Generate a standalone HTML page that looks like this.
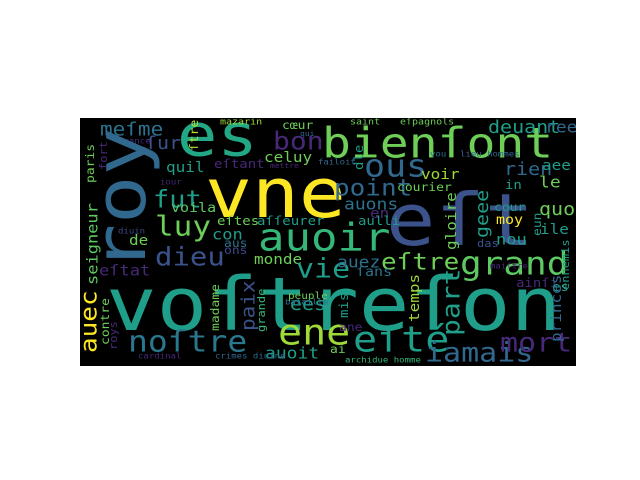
<!DOCTYPE html>
<html><head><meta charset="utf-8"><style>
html,body{margin:0;padding:0;background:#fff;width:640px;height:480px;overflow:hidden}
#c{position:absolute;left:80px;top:118px;width:496px;height:248px;background:#000;overflow:hidden}
.w{position:absolute;font-family:"DejaVu Sans Mono","Liberation Mono",monospace;line-height:1;white-space:nowrap;transform:scaleY(.88);transform-origin:0 0.92em}
.w.v{transform:rotate(-90deg) translateY(0.92em) scaleY(.88) translateY(-0.92em);transform-origin:0 0}
</style></head><body>
<div id="c"></div>
<div id="w" style="position:absolute;left:0;top:0;width:640px;height:480px;clip-path:inset(118px 64px 114px 80px)">
<div class="w" style="left:106px;top:258px;font-size:84px;color:#1f9e89">voſtreſon</div>
<div class="w" style="left:205px;top:151px;font-size:78px;color:#fde725">vne</div>
<div class="w" style="left:386px;top:176px;font-size:82px;color:#3b528b">eſt</div>
<div class="w" style="left:258px;top:214px;font-size:44px;color:#35b779">auoir</div>
<div class="w" style="left:322px;top:117px;font-size:48px;color:#6ece58">bienſont</div>
<div class="w" style="left:177px;top:99px;font-size:67px;color:#22a884">es</div>
<div class="w" style="left:460px;top:245px;font-size:36px;color:#5ec962">grand</div>
<div class="w" style="left:128px;top:323px;font-size:33px;color:#2a788e">noſtre</div>
<div class="w" style="left:155px;top:241px;font-size:29px;color:#3b528b">dieu</div>
<div class="w" style="left:155px;top:210px;font-size:31px;color:#6ece58">luy</div>
<div class="w" style="left:153px;top:185px;font-size:27px;color:#1f9e89">fut</div>
<div class="w" style="left:100px;top:118px;font-size:21px;color:#2c728e">meſme</div>
<div class="w" style="left:145px;top:132px;font-size:20px;color:#3b528b">ſur</div>
<div class="w" style="left:273px;top:126px;font-size:28px;color:#482878">bon</div>
<div class="w" style="left:264px;top:149px;font-size:16px;color:#6ece58">celuy</div>
<div class="w" style="left:166px;top:159px;font-size:16px;color:#1f9e89">quil</div>
<div class="w" style="left:214px;top:157px;font-size:14px;color:#482878">eſtant</div>
<div class="w" style="left:282px;top:119px;font-size:13px;color:#6ece58">cœur</div>
<div class="w" style="left:220px;top:117px;font-size:10px;color:#a0da39">mazarin</div>
<div class="w" style="left:171px;top:200px;font-size:15px;color:#5ec962">voila</div>
<div class="w" style="left:217px;top:214px;font-size:14px;color:#6ece58">eſtes</div>
<div class="w" style="left:257px;top:214px;font-size:14px;color:#1f9e89">aſſeurer</div>
<div class="w" style="left:129px;top:232px;font-size:16px;color:#6ece58">de</div>
<div class="w" style="left:212px;top:226px;font-size:17px;color:#1f9e89">con</div>
<div class="w" style="left:224px;top:237px;font-size:13px;color:#2c728e">aus</div>
<div class="w" style="left:224px;top:244px;font-size:13px;color:#3e4989">ons</div>
<div class="w" style="left:254px;top:251px;font-size:16px;color:#6ece58">monde</div>
<div class="w" style="left:99px;top:262px;font-size:17px;color:#482878">eſtat</div>
<div class="w" style="left:296px;top:253px;font-size:30px;color:#1f9e89">vie</div>
<div class="w" style="left:290px;top:293px;font-size:20px;color:#1f9e89">ees</div>
<div class="w" style="left:288px;top:290px;font-size:11px;color:#6ece58">peuple</div>
<div class="w" style="left:265px;top:344px;font-size:18px;color:#1f9e89">auoit</div>
<div class="w" style="left:278px;top:311px;font-size:40px;color:#a0da39">ene</div>
<div class="w" style="left:138px;top:352px;font-size:9px;color:#482878">cardinal</div>
<div class="w" style="left:215px;top:352px;font-size:9px;color:#31688e">crimes diuine</div>
<div class="w" style="left:364px;top:148px;font-size:35px;color:#31688e">ous</div>
<div class="w" style="left:488px;top:116px;font-size:20px;color:#1f9e89">deuant</div>
<div class="w" style="left:545px;top:118px;font-size:18px;color:#31688e">ree</div>
<div class="w" style="left:400px;top:117px;font-size:10px;color:#6ece58">eſpagnols</div>
<div class="w" style="left:350px;top:117px;font-size:10px;color:#6ece58">saint</div>
<div class="w" style="left:504px;top:158px;font-size:20px;color:#31688e">rien</div>
<div class="w" style="left:542px;top:157px;font-size:16px;color:#1f9e89">aee</div>
<div class="w" style="left:334px;top:174px;font-size:26px;color:#31688e">point</div>
<div class="w" style="left:421px;top:166px;font-size:16px;color:#a0da39">voir</div>
<div class="w" style="left:397px;top:181px;font-size:13px;color:#6ece58">courier</div>
<div class="w" style="left:539px;top:173px;font-size:18px;color:#6ece58">le</div>
<div class="w" style="left:505px;top:178px;font-size:14px;color:#1f9e89">in</div>
<div class="w" style="left:344px;top:195px;font-size:18px;color:#2c728e">auons</div>
<div class="w" style="left:370px;top:205px;font-size:16px;color:#482878">en</div>
<div class="w" style="left:494px;top:201px;font-size:13px;color:#1f9e89">cour</div>
<div class="w" style="left:539px;top:198px;font-size:20px;color:#6ece58">quoy</div>
<div class="w" style="left:496px;top:212px;font-size:15px;color:#fde725">moy</div>
<div class="w" style="left:358px;top:214px;font-size:14px;color:#1f9e89">aulli</div>
<div class="w" style="left:540px;top:221px;font-size:16px;color:#1f9e89">ile</div>
<div class="w" style="left:496px;top:231px;font-size:17px;color:#1f9e89">nou</div>
<div class="w" style="left:477px;top:237px;font-size:12px;color:#3b528b">das</div>
<div class="w" style="left:381px;top:248px;font-size:26px;color:#6ece58">eſtre</div>
<div class="w" style="left:337px;top:253px;font-size:18px;color:#2c728e">auez</div>
<div class="w" style="left:356px;top:264px;font-size:15px;color:#2c728e">ſans</div>
<div class="w" style="left:516px;top:276px;font-size:14px;color:#482878">ainſi</div>
<div class="w" style="left:353px;top:318px;font-size:40px;color:#1f9e89">eſté</div>
<div class="w" style="left:425px;top:337px;font-size:30px;color:#31688e">iamais</div>
<div class="w" style="left:500px;top:327px;font-size:30px;color:#482878">mort</div>
<div class="w" style="left:552px;top:280px;font-size:14px;color:#1f9e89">es</div>
<div class="w" style="left:339px;top:321px;font-size:13px;color:#482878">ane</div>
<div class="w" style="left:345px;top:356px;font-size:9px;color:#35b779">archidue homme</div>
<div class="w" style="left:330px;top:343px;font-size:13px;color:#6ece58">ai</div>
<div class="w" style="left:300px;top:130px;font-size:8px;color:#31688e">qui</div>
<div class="w" style="left:318px;top:158px;font-size:9px;color:#31688e">failoit</div>
<div class="w" style="left:270px;top:162px;font-size:8px;color:#482878">mettre</div>
<div class="w" style="left:118px;top:137px;font-size:9px;color:#482878">france</div>
<div class="w" style="left:285px;top:298px;font-size:9px;color:#2c728e">bataille</div>
<div class="w" style="left:118px;top:227px;font-size:9px;color:#3e4989">diuin</div>
<div class="w" style="left:160px;top:178px;font-size:9px;color:#482878">iour</div>
<div class="w" style="left:460px;top:150px;font-size:9px;color:#31688e">lieu hommes</div>
<div class="w" style="left:430px;top:150px;font-size:9px;color:#2c728e">vou</div>
<div class="w" style="left:490px;top:262px;font-size:9px;color:#482878">maiſtre</div>
<div class="w v" style="left:77px;top:272px;font-size:80px;color:#31688e">roy</div>
<div class="w v" style="left:75px;top:353px;font-size:26px;color:#fde725">auec</div>
<div class="w v" style="left:84px;top:285px;font-size:17px;color:#5ec962">seigneur</div>
<div class="w v" style="left:84px;top:183px;font-size:13px;color:#6ece58">paris</div>
<div class="w v" style="left:99px;top:345px;font-size:13px;color:#6ece58">contre</div>
<div class="w v" style="left:107px;top:350px;font-size:12px;color:#482878">roys</div>
<div class="w v" style="left:237px;top:331px;font-size:21px;color:#3b528b">paix</div>
<div class="w v" style="left:209px;top:331px;font-size:13px;color:#6ece58">madame</div>
<div class="w v" style="left:255px;top:332px;font-size:12px;color:#35b779">grande</div>
<div class="w v" style="left:188px;top:151px;font-size:13px;color:#b5de2b">ſtre</div>
<div class="w v" style="left:471px;top:238px;font-size:20px;color:#1f9e89">geee</div>
<div class="w v" style="left:443px;top:250px;font-size:16px;color:#6ece58">gloire</div>
<div class="w v" style="left:436px;top:336px;font-size:28px;color:#1f9e89">part</div>
<div class="w v" style="left:406px;top:322px;font-size:16px;color:#a0da39">temps</div>
<div class="w v" style="left:548px;top:342px;font-size:16px;color:#31688e">princes</div>
<div class="w v" style="left:559px;top:290px;font-size:12px;color:#1f9e89">ennemis</div>
<div class="w v" style="left:337px;top:318px;font-size:14px;color:#1f9e89">mis</div>
<div class="w v" style="left:352px;top:170px;font-size:14px;color:#1f9e89">dle</div>
<div class="w v" style="left:531px;top:236px;font-size:13px;color:#1f9e89">eun</div>
<div class="w v" style="left:97px;top:170px;font-size:12px;color:#482878">fort</div>
</div>
</body></html>
